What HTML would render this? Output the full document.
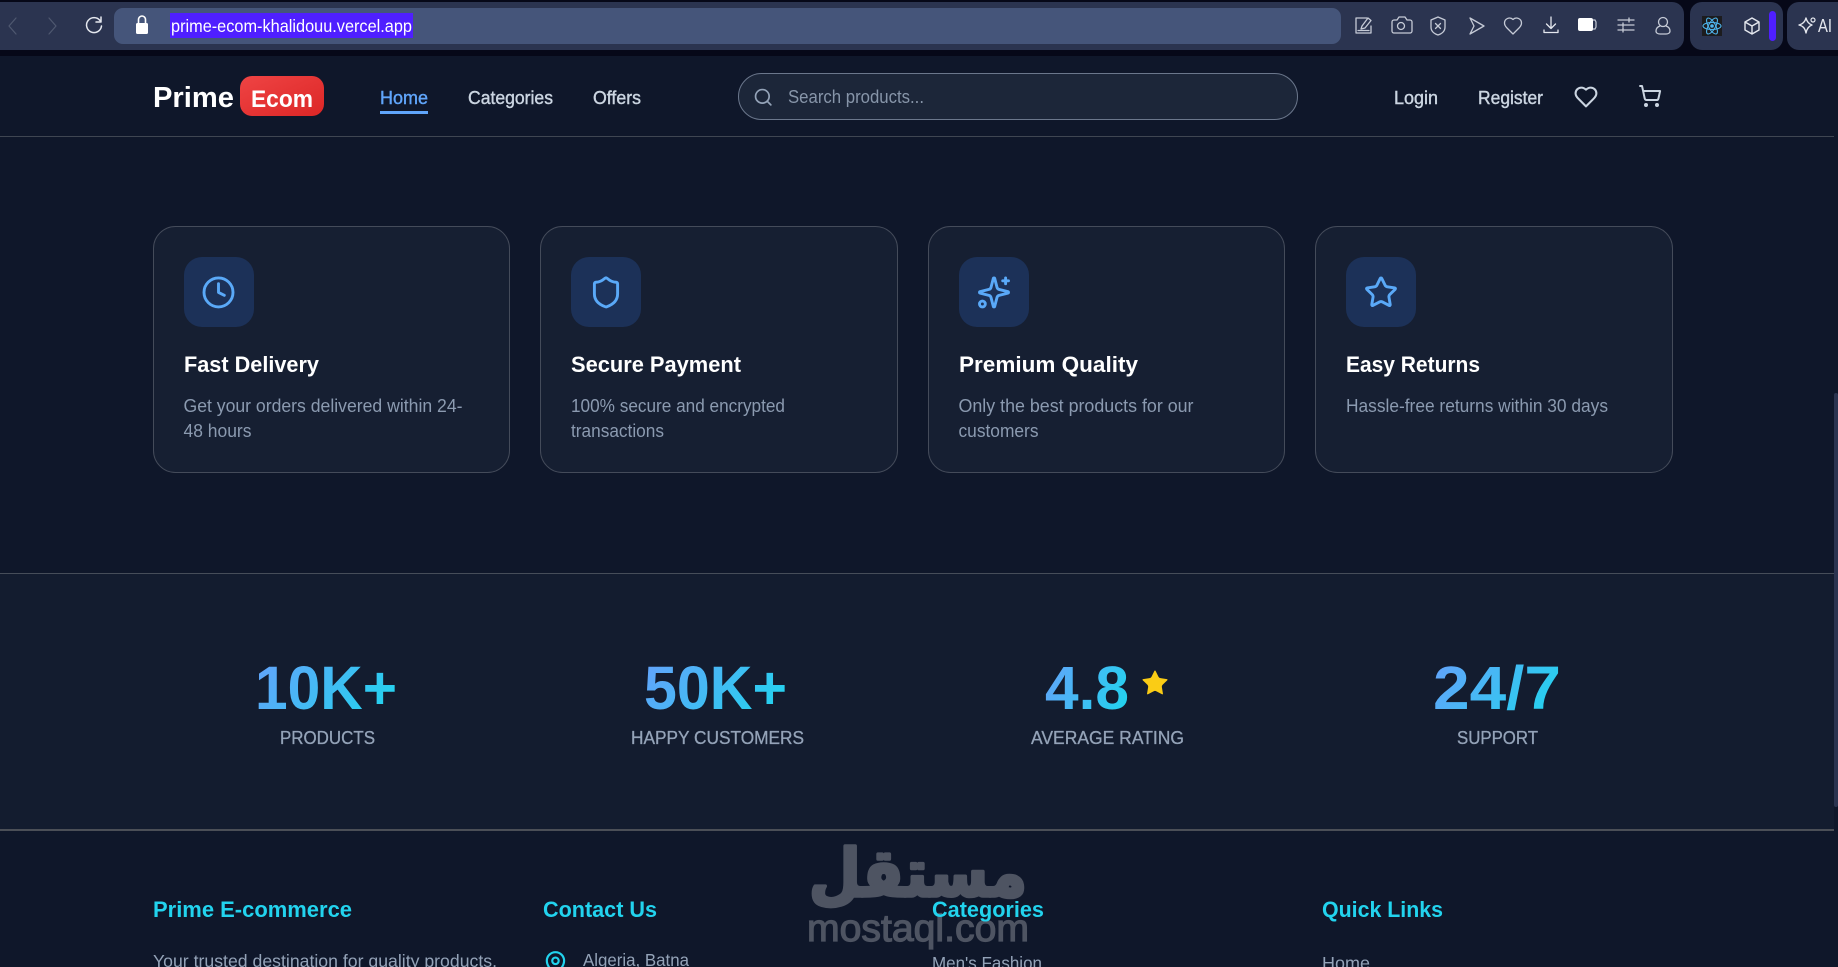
<!DOCTYPE html>
<html lang="en">
<head>
<meta charset="utf-8">
<title>Prime Ecom</title>
<style>
html,body{margin:0;padding:0;width:1838px;height:967px;overflow:hidden;background:#0f172a}
svg{display:block}
text{font-family:"Liberation Sans",sans-serif}
.b{font-weight:700}
.i{fill:none;stroke-linecap:round;stroke-linejoin:round}
</style>
</head>
<body>
<svg width="1838" height="967" viewBox="0 0 1838 967" xmlns="http://www.w3.org/2000/svg">
<defs>
<linearGradient id="g" x1="0" y1="0.3" x2="1" y2="0.7"><stop offset="0" stop-color="#60a5fa"/><stop offset="1" stop-color="#22d3ee"/></linearGradient>
<linearGradient id="r" x1="0" y1="0" x2="1" y2="1"><stop offset="0" stop-color="#ef4444"/><stop offset="1" stop-color="#dc2626"/></linearGradient>
</defs>
<rect width="1838" height="967" fill="#0f172a"/>
<!-- browser chrome -->
<rect width="1838" height="56" fill="#060818"/>
<path d="M0 2H1672a12 12 0 0 1 12 12V38a12 12 0 0 1-12 12H0Z" fill="#2b3450"/>
<rect x="1690" y="2" width="93" height="48" rx="12" fill="#2b3450"/>
<path d="M1838 2H1799a12 12 0 0 0-12 12V38a12 12 0 0 0 12 12H1838Z" fill="#2b3450"/>
<rect x="114" y="8" width="1227" height="36" rx="9" fill="#45557a"/>
<rect x="170" y="13" width="243" height="25" fill="#4f1fff"/>
<text x="171" y="32" font-size="17.500" fill="#fff" textLength="241" lengthAdjust="spacingAndGlyphs">prime-ecom-khalidouu.vercel.app</text>
<path class="i" d="M16 18 9 26l7 8" stroke="#4f5870" stroke-width="1.200"/>
<path class="i" d="M49 18l7 8-7 8" stroke="#4f5870" stroke-width="1.200"/>
<path class="i" d="M100 20.500A7.500 7.500 0 1 0 101.500 26M101 17v5h-5" stroke="#e4e7ee" stroke-width="1.500"/>
<rect x="136" y="23" width="12" height="11" rx="1.500" fill="#fff"/>
<path class="i" d="M138.500 23v-3.500a3.500 3.500 0 0 1 7 0V23" stroke="#fff" stroke-width="1.600"/>
<!-- toolbar icons -->
<g class="i" stroke="#c5cad6" stroke-width="1.300">
<path d="M1367 18h-11v15h15v-7M1361 29l1-3 6-8 3 2.500-6 7.500ZM1358 30.500h11"/>
<path d="M1394 20h3l2-3h6l2 3h3a2 2 0 0 1 2 2v9a2 2 0 0 1-2 2h-16a2 2 0 0 1-2-2v-9a2 2 0 0 1 2-2Z"/><circle cx="1401" cy="26" r="3.500"/>
<path d="M1438 17l7 3v7c0 5-4 7-7 8-3-1-7-3-7-8v-7ZM1435.500 23.500l5 5M1440.500 23.500l-5 5"/>
<path d="M1470 18l14 8-14 8 4-8Z"/>
<path d="M1513 34l-6-6c-2-2-2.500-3.500-2.500-5a5 5 0 0 1 8.500-3.500 5 5 0 0 1 8.500 3.500c0 1.500-.5 3-2.500 5Z"/>
<path d="M1551 17v11M1546.500 24l4.500 4.500 4.500-4.500M1544 30v2.500h14V30" stroke="#e4e7ee"/>
<path d="M1618 20h16M1618 25h16M1618 30h16M1629 18v4M1623 23v4M1623 28v4"/>
<circle cx="1663" cy="22" r="4.500"/><path d="M1660 26c-3 1-4 3-4 5s2 3 4 3h6c2 0 4-1 4-3s-1-4-4-5"/>
</g>
<rect x="1578" y="18" width="15" height="13" rx="2" fill="#fff"/><path d="M1593 20h2l1 2v5l-1 2h-2" fill="none" stroke="#c5cad6" stroke-width="1.200"/>
<rect x="1702" y="16" width="20" height="20" fill="#1c1c1e"/>
<g fill="none" stroke="#4fb6ef" stroke-width="1.100"><ellipse cx="1712" cy="26" rx="9" ry="3.500"/><ellipse cx="1712" cy="26" rx="9" ry="3.500" transform="rotate(60 1712 26)"/><ellipse cx="1712" cy="26" rx="9" ry="3.500" transform="rotate(120 1712 26)"/></g><circle cx="1712" cy="26" r="1.800" fill="#4fb6ef"/>
<path class="i" d="M1752 18l7 4v8l-7 4-7-4v-8ZM1745 22l7 4 7-4M1752 26v8" stroke="#e4e7ee" stroke-width="1.400"/>
<rect x="1769" y="11" width="7" height="30" rx="3.500" fill="#4f1fff"/>
<path class="i" d="M1806 18c1 4 3 6 6 7-3 1-5 3-6 8-1-5-3-7-7-8 4-1 6-3 7-7Z" stroke="#e4e7ee" stroke-width="1.400"/><circle cx="1813" cy="20" r="2" fill="none" stroke="#e4e7ee" stroke-width="1.200"/>
<text x="1818" y="32" font-size="18" fill="#e4e7ee" textLength="14" lengthAdjust="spacingAndGlyphs">AI</text>
<!-- header -->
<rect x="0" y="136" width="1834" height="1" fill="#3f4652"/>
<text class="b" x="153" y="107" font-size="28.500" fill="#fff" textLength="81" lengthAdjust="spacingAndGlyphs">Prime</text>
<rect x="240" y="76" width="84" height="40" rx="12" fill="url(#r)"/>
<text class="b" x="251" y="107" font-size="24.500" fill="#fff" textLength="62" lengthAdjust="spacingAndGlyphs">Ecom</text>
<text x="380" y="104" font-size="18" fill="#60a5fa" stroke="#60a5fa" stroke-width=".4" textLength="48" lengthAdjust="spacingAndGlyphs">Home</text>
<rect x="380" y="111" width="48" height="3" fill="#60a5fa"/>
<text x="468" y="104" font-size="18" fill="#cbd5e1" stroke="#cbd5e1" stroke-width=".4" textLength="85" lengthAdjust="spacingAndGlyphs">Categories</text>
<text x="593" y="104" font-size="18" fill="#cbd5e1" stroke="#cbd5e1" stroke-width=".4" textLength="48" lengthAdjust="spacingAndGlyphs">Offers</text>
<rect x="738.500" y="73.500" width="559" height="46" rx="23" fill="#1c2639" stroke="#6b778c"/>
<g class="i" transform="translate(753 87) scale(.85)" stroke="#94a3b8" stroke-width="2"><circle cx="11" cy="11" r="8"/><path d="m21 21-4.300-4.300"/></g>
<text x="788" y="103" font-size="18" fill="#8795a9" textLength="136" lengthAdjust="spacingAndGlyphs">Search products...</text>
<text x="1394" y="104" font-size="18" fill="#cbd5e1" stroke="#cbd5e1" stroke-width=".4" textLength="44" lengthAdjust="spacingAndGlyphs">Login</text>
<text x="1478" y="104" font-size="18" fill="#cbd5e1" stroke="#cbd5e1" stroke-width=".4" textLength="65" lengthAdjust="spacingAndGlyphs">Register</text>
<g class="i" transform="translate(1573.500 84.500) scale(1.040)" stroke="#cbd5e1" stroke-width="2"><path d="M19 14c1.490-1.460 3-3.210 3-5.500A5.500 5.500 0 0 0 16.500 3c-1.760 0-3 .5-4.500 2-1.500-1.500-2.740-2-4.500-2A5.500 5.500 0 0 0 2 8.500c0 2.300 1.500 4.050 3 5.500l7 7Z"/></g>
<g class="i" transform="translate(1638 84)" stroke="#cbd5e1" stroke-width="2"><circle cx="8" cy="21" r="1"/><circle cx="19" cy="21" r="1"/><path d="M2.050 2.050h2l2.660 12.420a2 2 0 0 0 2 1.580h9.780a2 2 0 0 0 1.950-1.570l1.650-7.430H5.120"/></g>
<!-- cards -->
<g fill="#161f32" stroke="#444b5a">
<rect x="153.500" y="226.500" width="356" height="246" rx="22"/>
<rect x="540.500" y="226.500" width="357" height="246" rx="22"/>
<rect x="928.500" y="226.500" width="356" height="246" rx="22"/>
<rect x="1315.500" y="226.500" width="357" height="246" rx="22"/>
</g>
<g fill="#1c3158">
<rect x="184" y="257" width="70" height="70" rx="18"/>
<rect x="571" y="257" width="70" height="70" rx="18"/>
<rect x="959" y="257" width="70" height="70" rx="18"/>
<rect x="1346" y="257" width="70" height="70" rx="18"/>
</g>
<g class="i" stroke="#5aa9f8" stroke-width="2">
<g transform="translate(201.100 275) scale(1.450)"><circle cx="12" cy="12" r="10"/><path d="M12 6v6l4 2"/></g>
<g transform="translate(588.600 275) scale(1.450)"><path d="M20 13c0 5-3.500 7.500-7.660 8.950a1 1 0 0 1-.67-.01C7.500 20.500 4 18 4 13V6a1 1 0 0 1 1-1c2 0 4.500-1.200 6.240-2.720a1.170 1.170 0 0 1 1.520 0C14.510 3.810 17 5 19 5a1 1 0 0 1 1 1z"/></g>
<g transform="translate(976.600 275) scale(1.450)"><path d="M9.937 15.500A2 2 0 0 0 8.500 14.063l-6.135-1.582a.5.5 0 0 1 0-.962L8.500 9.936A2 2 0 0 0 9.937 8.500l1.582-6.135a.5.5 0 0 1 .963 0L14.063 8.500A2 2 0 0 0 15.500 9.937l6.135 1.581a.5.5 0 0 1 0 .964L15.500 14.063a2 2 0 0 0-1.437 1.437l-1.582 6.135a.5.5 0 0 1-.963 0z"/><path d="M20 2v4M22 4h-4"/><circle cx="4" cy="20" r="2"/></g>
<g transform="translate(1363.600 275) scale(1.450)"><path d="M11.525 2.295a.53.53 0 0 1 .95 0l2.310 4.679a2.123 2.123 0 0 0 1.595 1.160l5.166.756a.53.53 0 0 1 .294.904l-3.736 3.638a2.123 2.123 0 0 0-.611 1.878l.882 5.140a.53.53 0 0 1-.771.560l-4.618-2.428a2.122 2.122 0 0 0-1.973 0L6.396 21.010a.53.53 0 0 1-.77-.560l.881-5.139a2.122 2.122 0 0 0-.611-1.879L2.160 9.795a.53.53 0 0 1 .294-.906l5.165-.755a2.122 2.122 0 0 0 1.597-1.160z"/></g>
</g>
<g class="b" font-size="22" fill="#fff">
<text x="184" y="372" textLength="135" lengthAdjust="spacingAndGlyphs">Fast Delivery</text>
<text x="571" y="372" textLength="170" lengthAdjust="spacingAndGlyphs">Secure Payment</text>
<text x="959" y="372" textLength="179" lengthAdjust="spacingAndGlyphs">Premium Quality</text>
<text x="1346" y="372" textLength="134" lengthAdjust="spacingAndGlyphs">Easy Returns</text>
</g>
<g font-size="18" fill="#8b9ab0">
<text x="183.500" y="412" textLength="279" lengthAdjust="spacingAndGlyphs">Get your orders delivered within 24-</text>
<text x="183.500" y="437" textLength="68" lengthAdjust="spacingAndGlyphs">48 hours</text>
<text x="571" y="412" textLength="214" lengthAdjust="spacingAndGlyphs">100% secure and encrypted</text>
<text x="571" y="437" textLength="93" lengthAdjust="spacingAndGlyphs">transactions</text>
<text x="958.500" y="412" textLength="235" lengthAdjust="spacingAndGlyphs">Only the best products for our</text>
<text x="958.500" y="437" textLength="80" lengthAdjust="spacingAndGlyphs">customers</text>
<text x="1346" y="412" textLength="262" lengthAdjust="spacingAndGlyphs">Hassle-free returns within 30 days</text>
</g>
<!-- stats -->
<rect x="0" y="574" width="1834" height="255" fill="#131c2f"/>
<rect x="0" y="573" width="1834" height="1" fill="#464d59"/>
<rect x="0" y="829" width="1834" height="2" fill="#4b4f57"/>
<rect x="1834" y="393" width="4" height="414" rx="2" fill="#2b3450"/>
<g class="b" font-size="61" fill="url(#g)">
<text x="255" y="709" textLength="142" lengthAdjust="spacingAndGlyphs">10K+</text>
<text x="644" y="709" textLength="143" lengthAdjust="spacingAndGlyphs">50K+</text>
<text x="1045" y="709" textLength="84" lengthAdjust="spacingAndGlyphs">4.8</text>
<text x="1433" y="709" textLength="128" lengthAdjust="spacingAndGlyphs">24/7</text>
</g>
<g transform="translate(1140 668) scale(1.250)" fill="#facc15"><path d="M11.525 2.295a.53.53 0 0 1 .95 0l2.310 4.679a2.123 2.123 0 0 0 1.595 1.160l5.166.756a.53.53 0 0 1 .294.904l-3.736 3.638a2.123 2.123 0 0 0-.611 1.878l.882 5.140a.53.53 0 0 1-.771.560l-4.618-2.428a2.122 2.122 0 0 0-1.973 0L6.396 21.010a.53.53 0 0 1-.77-.560l.881-5.139a2.122 2.122 0 0 0-.611-1.879L2.160 9.795a.53.53 0 0 1 .294-.906l5.165-.755a2.122 2.122 0 0 0 1.597-1.160z"/></g>
<g font-size="18.500" fill="#94a3b8" stroke="#94a3b8" stroke-width=".3">
<text x="280" y="744" textLength="95" lengthAdjust="spacingAndGlyphs">PRODUCTS</text>
<text x="631" y="744" textLength="173" lengthAdjust="spacingAndGlyphs">HAPPY CUSTOMERS</text>
<text x="1031" y="744" textLength="153" lengthAdjust="spacingAndGlyphs">AVERAGE RATING</text>
<text x="1457" y="744" textLength="81" lengthAdjust="spacingAndGlyphs">SUPPORT</text>
</g>
<!-- footer watermark -->
<text x="809" y="896" font-size="66" fill="#4e5462" stroke="#4e5462" stroke-width="3.500" stroke-linejoin="round" class="b" style="font-family:'DejaVu Sans',sans-serif" textLength="218" lengthAdjust="spacingAndGlyphs">مستقل</text>
<text x="807" y="941" font-size="38" fill="#4e5462" stroke="#4e5462" stroke-width="1.200" textLength="222" lengthAdjust="spacingAndGlyphs">mostaql.com</text>
<!-- footer -->
<g class="b" font-size="22" fill="#22d3ee">
<text x="153" y="917" textLength="199" lengthAdjust="spacingAndGlyphs">Prime E-commerce</text>
<text x="543" y="917" textLength="114" lengthAdjust="spacingAndGlyphs">Contact Us</text>
<text x="932" y="917" textLength="112" lengthAdjust="spacingAndGlyphs">Categories</text>
<text x="1322" y="917" textLength="121" lengthAdjust="spacingAndGlyphs">Quick Links</text>
</g>
<g font-size="17.500" fill="#94a3b8">
<text x="153" y="967" textLength="344" lengthAdjust="spacingAndGlyphs">Your trusted destination for quality products.</text>
<text x="583" y="966" textLength="106" lengthAdjust="spacingAndGlyphs">Algeria, Batna</text>
<text x="932" y="969" textLength="110" lengthAdjust="spacingAndGlyphs">Men's Fashion</text>
<text x="1322" y="969" textLength="48" lengthAdjust="spacingAndGlyphs">Home</text>
</g>
<g class="i" transform="translate(542.500 950) scale(1.080)" stroke="#22d3ee" stroke-width="2"><path d="M20 10c0 4.993-5.539 10.193-7.399 11.799a1 1 0 0 1-1.202 0C9.539 20.193 4 14.993 4 10a8 8 0 0 1 16 0"/><circle cx="12" cy="10" r="3"/></g>
</svg>
</body>
</html>
